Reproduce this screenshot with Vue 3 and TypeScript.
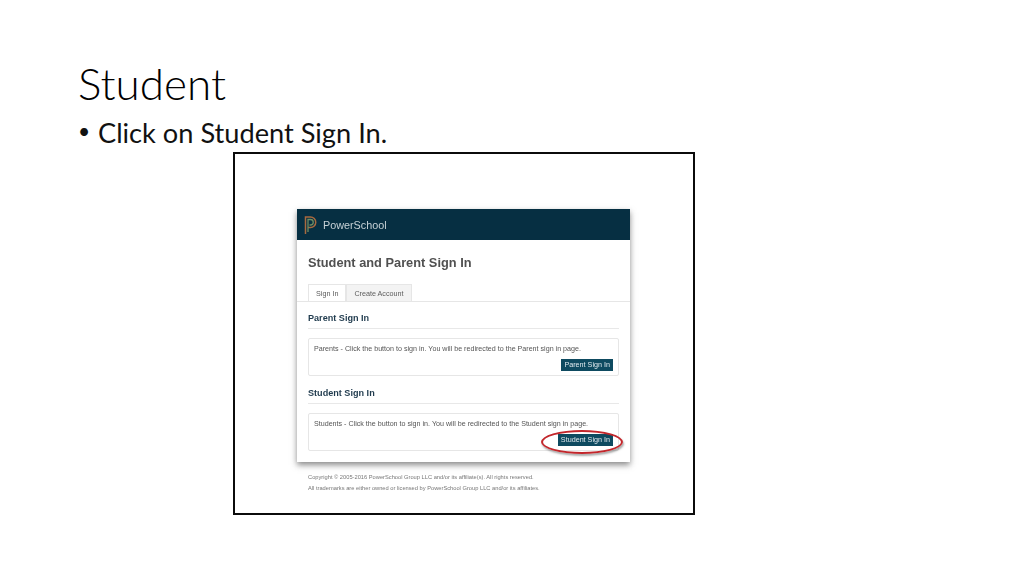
<script setup lang="ts">
const title = 'Student'
const bullet = 'Click on Student Sign In.'
</script>

<template>
  <div class="slide">
    <h1 class="title">{{ title }}</h1>
    <div class="bullet"><span class="dot">•</span><span>{{ bullet }}</span></div>
    <div class="frame">
      <div class="card">
        <div class="bar">
          <svg class="logo" width="13" height="18" viewBox="0 0 13 18">
            <path d="M1.500 18V1h5a4.800 4.800 0 0 1 0 10.500H4" fill="none" stroke="#a8693f" stroke-width="1.500"/>
            <path d="M4 16V3.500h2.500a2.600 2.600 0 0 1 0 5.500H5.500" fill="none" stroke="#6d8c63" stroke-width="1.300"/>
          </svg>
          <span class="brand">PowerSchool</span>
        </div>
        <div class="body">
          <h2 class="heading">Student and Parent Sign In</h2>
          <div class="tabs">
            <span class="tab active">Sign In</span>
            <span class="tab">Create Account</span>
          </div>
          <div class="content">
            <h3 class="sec">Parent Sign In</h3>
            <div class="box">
              <p>Parents - Click the button to sign in. You will be redirected to the Parent sign in page.</p>
              <div class="row"><span class="btn">Parent Sign In</span></div>
            </div>
            <h3 class="sec second">Student Sign In</h3>
            <div class="box">
              <p>Students - Click the button to sign in. You will be redirected to the Student sign in page.</p>
              <div class="row">
                <span class="btn student">Student Sign In<i class="ring"></i></span>
              </div>
            </div>
          </div>
        </div>
      </div>
      <div class="foot">
        <p>Copyright © 2005-2016 PowerSchool Group LLC and/or its affiliate(s). All rights reserved.</p>
        <p>All trademarks are either owned or licensed by PowerSchool Group LLC and/or its affiliates.</p>
      </div>
    </div>
  </div>
</template>

<style scoped>
.slide {
  width: 1024px;
  height: 576px;
  box-sizing: border-box;
  padding: 57px 0 0 78px;
  background: #fff;
  overflow: hidden;
  font-family: Lato, "Liberation Sans", sans-serif;
  color: #111;
}
.title {
  margin: 0;
  font-size: 44px;
  font-weight: 300;
  line-height: 52px;
  color: #000;
}
.bullet {
  display: flex;
  margin-top: 8px;
  font-size: 27.200px;
  line-height: 32px;
  font-weight: 400;
}
.dot {
  width: 20px;
  font-size: 21px;
  line-height: 27px;
  box-sizing: border-box;
}
.frame {
  box-sizing: border-box;
  width: 462px;
  height: 363px;
  margin: 3px 0 0 155px;
  border: 2px solid #0b0b0b;
  padding: 55px 0 0 62px;
  background: #fff;
  font-family: "Liberation Sans", Arial, sans-serif;
}
.card {
  width: 333px;
  height: 253px;
  background: #fff;
  box-shadow: 0 3px 6px rgba(60, 60, 60, 0.6);
  display: flex;
  flex-direction: column;
  filter: blur(0.3px);
}
.bar {
  height: 31px;
  flex: none;
  background: #062f42;
  display: flex;
  align-items: center;
  gap: 6px;
  padding-left: 7px;
}
.logo { flex: none; }
.brand { color: #c6d1d6; font-size: 10.800px; }
.body { flex: 1; }
.heading {
  margin: 15px 0 0 11px;
  font-size: 12.800px;
  line-height: 16px;
  font-weight: 700;
  color: #505050;
}
.tabs {
  display: flex;
  margin: 13px 0 0 11px;
  height: 17px;
}
.tab {
  box-sizing: border-box;
  font-size: 7.200px;
  line-height: 17px;
  padding: 0 7px;
  height: 17px;
  color: #5c5c5c;
  background: #f3f3f3;
  border: 1px solid #e6e6e6;
  border-bottom: 0;
}
.tab.active { background: #fff; }
.content {
  border-top: 1px solid #e6e6e6;
  padding: 10px 11px 0;
}
.sec {
  margin: 0;
  padding-bottom: 4px;
  border-bottom: 1px solid #e8e8e8;
  font-size: 9.100px;
  line-height: 12px;
  font-weight: 700;
  color: #1f3a4d;
}
.sec.second { margin-top: 11px; }
.box {
  box-sizing: border-box;
  height: 38px;
  margin-top: 9px;
  padding: 6px 5px 0;
  border: 1px solid #e6e6e6;
  border-radius: 2px;
}
.box p {
  margin: 0;
  font-size: 7.130px;
  line-height: 9px;
  color: #555;
  white-space: nowrap;
}
.row {
  display: flex;
  justify-content: flex-end;
  margin-top: 5px;
}
.btn {
  position: relative;
  background: #0e4a60;
  color: #dfe9ee;
  font-size: 7.200px;
  line-height: 12px;
  padding: 0 3px;
}
.ring {
  position: absolute;
  left: -17px;
  top: -4px;
  box-sizing: border-box;
  width: 82px;
  height: 24px;
  border: 2px solid #c2262b;
  border-radius: 50%;
  box-shadow: 1px 2px 2px rgba(90, 90, 90, 0.5);
}
.foot { margin: 12px 0 0 11px; filter: blur(0.3px); }
.foot p {
  margin: 0 0 5px;
  font-size: 5.720px;
  line-height: 6px;
  color: #777;
  white-space: nowrap;
}
</style>
